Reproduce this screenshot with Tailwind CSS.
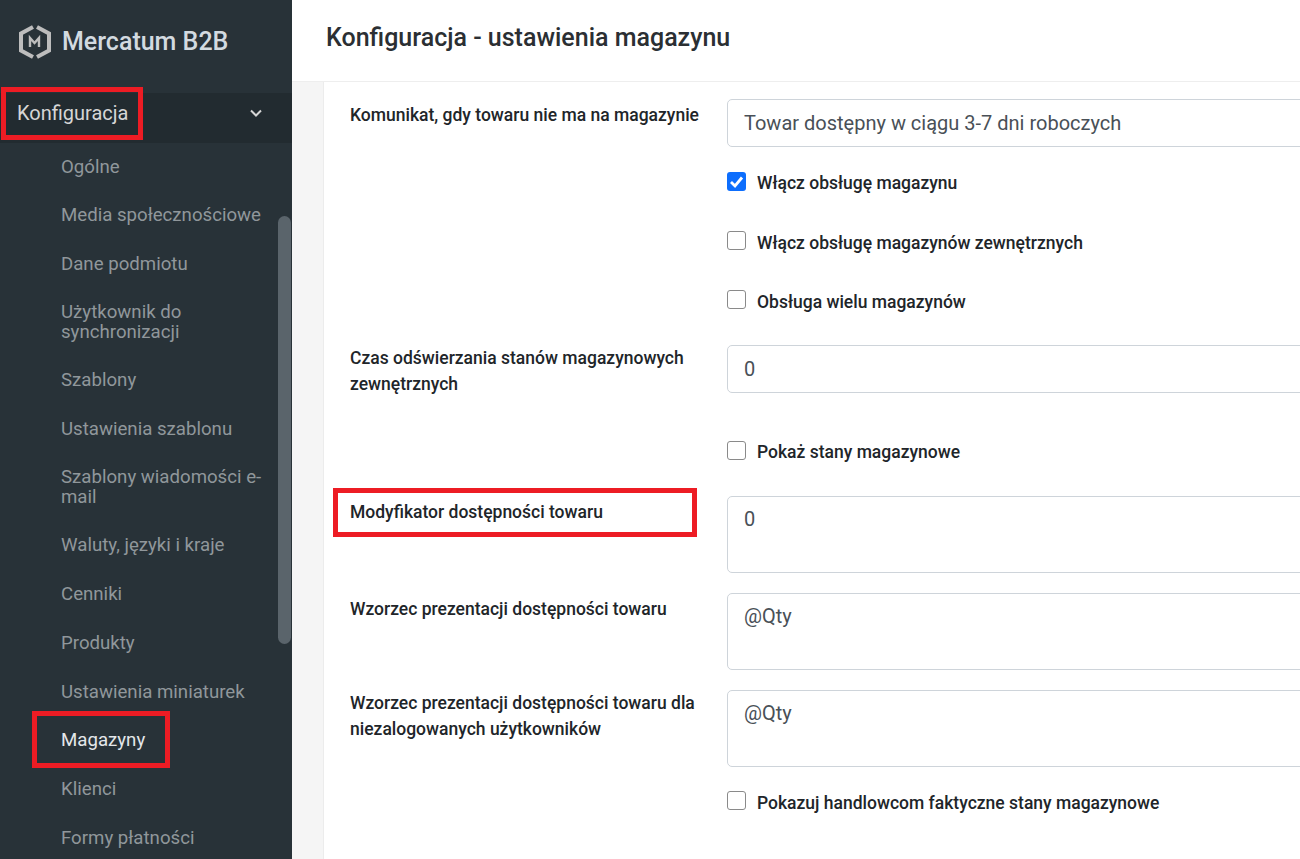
<!DOCTYPE html>
<html lang="pl">
<head>
    <meta charset="UTF-8">
    <title>Mercatum B2B</title>
    <script src="https://cdn.jsdelivr.net/npm/@tailwindcss/browser@4"></script>
</head>
<body class="h-[859px] overflow-hidden flex bg-white font-['Roboto',sans-serif]">
    <!-- Sidebar -->
    <aside class="relative w-[292px] h-[859px] shrink-0 overflow-hidden bg-[#283238]">
        <div class="h-[93px] pb-[10px] flex items-center pl-[19px]">
            <svg class="w-[32px] h-[34px]" viewBox="0 0 32 34" fill="none">
                <path d="M14 2 L2 8.5 V25.5 L14 32 M18 2 L30 8.5 V25.5 L18 32" stroke="#bdbdbd" stroke-width="4"/>
                <path d="M11 22 V13 L15.5 18 L20 13 V22" stroke="#bdbdbd" stroke-width="2.4"/>
            </svg>
            <span class="ml-[11px] text-[25px] font-medium text-[#d3dae0]">Mercatum B2B</span>
        </div>
        <div class="h-[50px] pb-[10px] flex items-center justify-between pl-[17px] pr-[29px] bg-[#222b30] text-[#d6d6d6] text-[20px]">
            <span>Konfiguracja</span>
            <svg class="w-[14px] h-[10px]" viewBox="0 0 14 10" fill="none"><path d="M2 2.5 L7 7.5 L12 2.5" stroke="#d6d6d6" stroke-width="2"/></svg>
        </div>
        <ul class="pl-[61px] pr-[26px] pt-[14px] text-[18.65px] leading-[20px] text-[#90979b]">
            <li class="pb-[28px]">Ogólne</li>
            <li class="pb-[29px]">Media społecznościowe</li>
            <li class="pb-[29px]">Dane podmiotu</li>
            <li class="pb-[28px] leading-[19.5px]">Użytkownik do synchronizacji</li>
            <li class="pb-[29px]">Szablony</li>
            <li class="pb-[29px]">Ustawienia szablonu</li>
            <li class="pb-[28px] leading-[19.5px]">Szablony wiadomości e-mail</li>
            <li class="pb-[29px]">Waluty, języki i kraje</li>
            <li class="pb-[29px]">Cenniki</li>
            <li class="pb-[29px]">Produkty</li>
            <li class="pb-[28px]">Ustawienia miniaturek</li>
            <li class="pb-[29px] text-[#e4e7ea]">Magazyny</li>
            <li class="pb-[29px]">Klienci</li>
            <li>Formy płatności</li>
        </ul>
        <div class="absolute left-[278px] top-[216px] w-[13px] h-[428px] rounded-full bg-[#5a646b]"></div>
        <div class="absolute left-[1px] top-[87px] w-[142px] h-[53px] border-[5px] border-[#ed1c24]"></div>
        <div class="absolute left-[32px] top-[711px] w-[138px] h-[57px] border-[5px] border-[#ed1c24]"></div>
    </aside>

    <main class="flex-1 min-w-0 flex flex-col">
        <header class="h-[82px] shrink-0 flex items-center pl-[34px] pb-[6px] border-b border-[#eeeeee] shadow-[0_1px_2px_rgba(0,0,0,0.03)]">
            <h1 class="text-[25px] font-medium text-[#2b2f33]">Konfiguracja - ustawienia magazynu</h1>
        </header>
        <div class="flex-1 pl-[31px] bg-[#f5f5f5]">
            <form class="relative h-full bg-white border-l border-[#ececec] pl-[26px] pt-[17px] text-[17.5px] text-[#212529] overflow-hidden">
                <div class="h-[48px] grid grid-cols-[377px_700px]">
                    <label class="pt-[3px] leading-[26px] font-medium">Komunikat, gdy towaru nie ma na magazynie</label>
                    <div class="h-[48px] flex items-center px-[16px] border border-[#ced4da] rounded-[5px] text-[20px] text-[#495057]">Towar dostępny w ciągu 3-7 dni roboczych</div>
                </div>
                <label class="mt-[24px] ml-[377px] h-[22px] flex items-start leading-[24px] font-medium">
                    <span class="w-[19px] h-[19px] mt-[1px] mr-[11px] rounded-[3px] bg-[#0d6efd] flex items-center justify-center">
                        <svg class="w-[15px] h-[15px]" viewBox="0 0 15 15" fill="none"><path d="M2 8 L6 12 L13 3.5" stroke="#fff" stroke-width="2.8"/></svg>
                    </span>Włącz obsługę magazynu
                </label>
                <label class="mt-[38px] ml-[377px] h-[22px] flex items-start leading-[24px] font-medium">
                    <span class="w-[19px] h-[19px] mr-[11px] rounded-[3px] border border-[#8a8a8a] bg-white"></span>Włącz obsługę magazynów zewnętrznych
                </label>
                <label class="mt-[37px] ml-[377px] h-[22px] flex items-start leading-[24px] font-medium">
                    <span class="w-[19px] h-[19px] mr-[11px] rounded-[3px] border border-[#8a8a8a] bg-white"></span>Obsługa wielu magazynów
                </label>
                <div class="mt-[33px] h-[48px] grid grid-cols-[377px_700px]">
                    <label class="pr-[20px] leading-[26px] font-medium">Czas odświerzania stanów magazynowych zewnętrznych</label>
                    <div class="h-[48px] flex items-center px-[16px] border border-[#ced4da] rounded-[5px] text-[20px] text-[#495057]">0</div>
                </div>
                <label class="mt-[48px] ml-[377px] h-[22px] flex items-start leading-[22px] font-medium">
                    <span class="w-[19px] h-[19px] mr-[11px] rounded-[3px] border border-[#8a8a8a] bg-white"></span>Pokaż stany magazynowe
                </label>
                <div class="mt-[33px] grid grid-cols-[377px_700px]">
                    <label class="pt-[3px] leading-[26px] font-medium">Modyfikator dostępności towaru</label>
                    <div class="h-[77px] px-[16px] pt-[8px] border border-[#ced4da] rounded-[5px] text-[20px] leading-[28px] text-[#495057]">0</div>
                </div>
                <div class="mt-[20px] grid grid-cols-[377px_700px]">
                    <label class="pt-[3px] leading-[26px] font-medium">Wzorzec prezentacji dostępności towaru</label>
                    <div class="h-[77px] px-[16px] pt-[8px] border border-[#ced4da] rounded-[5px] text-[20px] leading-[28px] text-[#495057]">@Qty</div>
                </div>
                <div class="mt-[20px] grid grid-cols-[377px_700px]">
                    <label class="pr-[20px] leading-[26px] font-medium">Wzorzec prezentacji dostępności towaru dla niezalogowanych użytkowników</label>
                    <div class="h-[77px] px-[16px] pt-[8px] border border-[#ced4da] rounded-[5px] text-[20px] leading-[28px] text-[#495057]">@Qty</div>
                </div>
                <label class="mt-[24px] ml-[377px] h-[22px] flex items-start leading-[24px] font-medium">
                    <span class="w-[19px] h-[19px] mr-[11px] rounded-[3px] border border-[#8a8a8a] bg-white"></span>Pokazuj handlowcom faktyczne stany magazynowe
                </label>
                <div class="absolute left-[9px] top-[406px] w-[364px] h-[49px] border-[5px] border-[#ed1c24]"></div>
            </form>
        </div>
    </main>
</body>
</html>
